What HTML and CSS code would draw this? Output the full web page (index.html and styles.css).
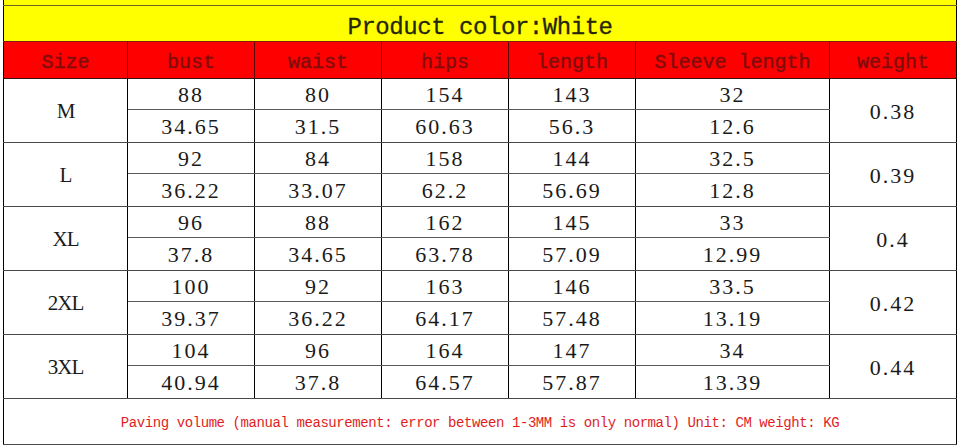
FILE: index.html
```html
<!DOCTYPE html>
<html lang="en">
<head>
<meta charset="utf-8">
<title>Size chart</title>
<link rel="stylesheet" href="styles.css">
</head>
<body>
<table class="chart">
  <colgroup>
    <col class="c-size"><col class="c-std"><col class="c-std"><col class="c-std"><col class="c-std"><col class="c-wide"><col class="c-std">
  </colgroup>
  <tr class="strip"><td colspan="7"></td></tr>
  <tr class="title"><td colspan="7">Product color:White</td></tr>
  <tr class="head">
    <th>Size</th><th>bust</th><th>waist</th><th>hips</th><th>length</th><th>Sleeve length</th><th>weight</th>
  </tr>
  <tr class="top">
    <td rowspan="2" class="size">M</td><td>88</td><td>80</td><td>154</td><td>143</td><td>32</td><td rowspan="2" class="wt">0.38</td>
  </tr>
  <tr class="bot"><td>34.65</td><td>31.5</td><td>60.63</td><td>56.3</td><td>12.6</td></tr>
  <tr class="top">
    <td rowspan="2" class="size">L</td><td>92</td><td>84</td><td>158</td><td>144</td><td>32.5</td><td rowspan="2" class="wt">0.39</td>
  </tr>
  <tr class="bot"><td>36.22</td><td>33.07</td><td>62.2</td><td>56.69</td><td>12.8</td></tr>
  <tr class="top">
    <td rowspan="2" class="size">XL</td><td>96</td><td>88</td><td>162</td><td>145</td><td>33</td><td rowspan="2" class="wt">0.4</td>
  </tr>
  <tr class="bot"><td>37.8</td><td>34.65</td><td>63.78</td><td>57.09</td><td>12.99</td></tr>
  <tr class="top">
    <td rowspan="2" class="size">2XL</td><td>100</td><td>92</td><td>163</td><td>146</td><td>33.5</td><td rowspan="2" class="wt">0.42</td>
  </tr>
  <tr class="bot"><td>39.37</td><td>36.22</td><td>64.17</td><td>57.48</td><td>13.19</td></tr>
  <tr class="top">
    <td rowspan="2" class="size">3XL</td><td>104</td><td>96</td><td>164</td><td>147</td><td>34</td><td rowspan="2" class="wt">0.44</td>
  </tr>
  <tr class="bot"><td>40.94</td><td>37.8</td><td>64.57</td><td>57.87</td><td>13.39</td></tr>
  <tr class="note"><td colspan="7">Paving volume (manual measurement: error between 1-3MM is only normal) Unit: CM weight: KG</td></tr>
</table>
</body>
</html>
```

FILE: styles.css
```css
html, body {
  margin: 0;
  padding: 0;
  background: #ffffff;
}

.chart {
  margin-left: 3px;
  border-collapse: collapse;
  table-layout: fixed;
  width: 953px;
}

.c-size { width: 124px; }
.c-std { width: 127px; }
.c-wide { width: 194px; }

.chart td,
.chart th {
  padding: 0;
  border-left: 1px solid #000;
  border-right: 1px solid #000;
  text-align: center;
  vertical-align: middle;
  font-weight: normal;
  overflow: hidden;
  white-space: nowrap;
}

.strip { height: 5px; }
.strip td {
  background: #ffff00;
  border-bottom: 1px solid #6b6b20;
}

.title { height: 36px; }
.title td {
  background: #ffff00;
  color: #262608;
  font-family: "Liberation Mono", monospace;
  font-size: 24px;
  letter-spacing: -0.45px;
  padding-top: 8px;
  -webkit-text-stroke: 0.3px #262608;
  border-bottom: 1px solid #8a1a10;
}

.head { height: 37px; }
.head th {
  background: #ff0000;
  color: #800c0c;
  font-family: "Liberation Mono", monospace;
  font-size: 20px;
  padding-top: 6px;
  -webkit-text-stroke: 0.4px #800c0c;
  border-left-color: #5a0000;
  border-right-color: #5a0000;
  border-bottom: 1px solid #3a1010;
}
.head th:first-child { border-left-color: #000; }
.head th:last-child { border-right-color: #000; }

.top { height: 31px; }
.bot { height: 33px; }

.top td,
.bot td {
  font-family: "Liberation Serif", serif;
  font-size: 22px;
  letter-spacing: 2px;
  color: #1a1a1a;
  padding-top: 3px;
}

.top td { border-bottom: 1px solid #5a5a5a; }
.bot td { border-bottom: 1px solid #4a4a4a; }
.top td.size,
.top td.wt { border-bottom: 1px solid #4a4a4a; }

.chart td.size {
  letter-spacing: -1px;
  font-size: 21px;
}

.note { height: 46px; }
.note td {
  font-family: "Liberation Mono", monospace;
  font-size: 14px;
  letter-spacing: -0.42px;
  color: #e01e1e;
  padding-top: 3px;
  border-bottom: 1px solid #4a4a4a;
}
```
